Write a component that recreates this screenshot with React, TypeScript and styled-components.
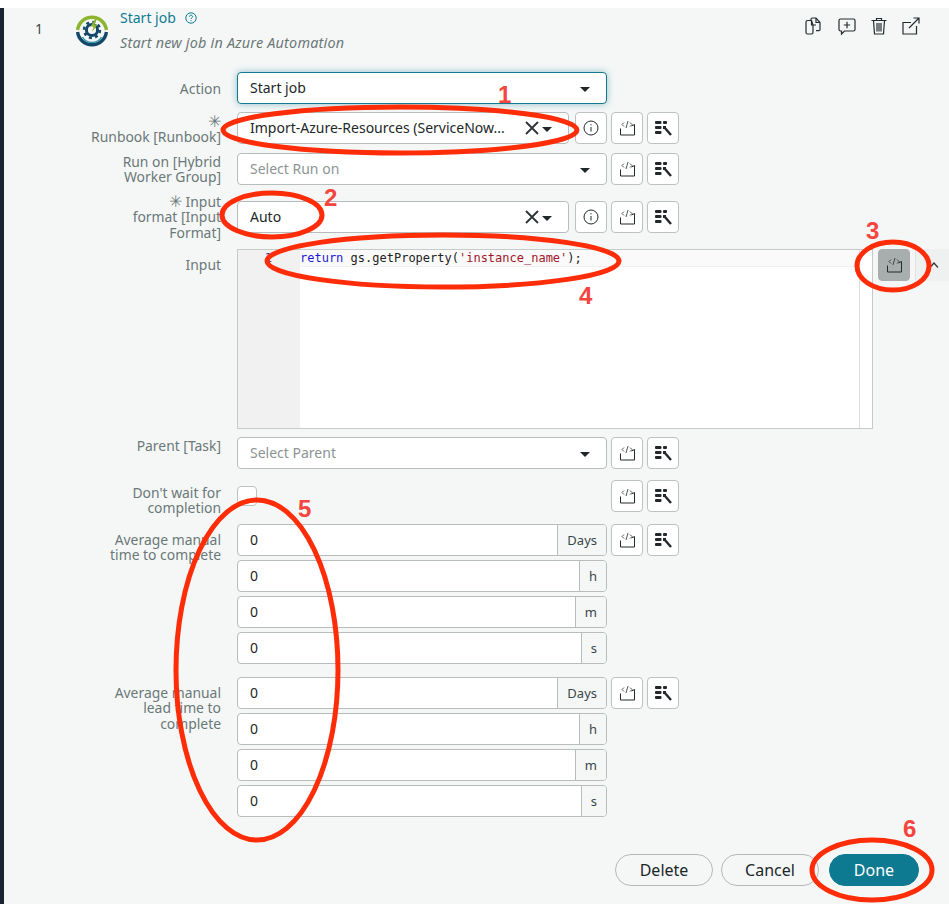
import React from "react";
import styled, { createGlobalStyle } from "styled-components";

const Global = createGlobalStyle`
  html, body { margin: 0; padding: 0; background: #fff; }
  body { font-family: "Noto Sans", "Open Sans", sans-serif; font-size: 14px; color: #1d2727; }
`;

const Page = styled.div`
  position: relative;
  width: 949px;
  height: 904px;
  overflow: hidden;
  padding-top: 8px;
  box-sizing: border-box;
  display: flex;
`;
const Strip = styled.div`
  width: 4px;
  flex: none;
  background: #1a2331;
`;
const Panel = styled.main`
  flex: 1;
  background: #f5f7f7;
  min-width: 0;
`;
const Header = styled.header`
  height: 64px;
  display: flex;
  align-items: flex-start;
  padding-right: 28px;
`;
const StepNo = styled.div`
  width: 71px;
  padding: 11px 0 0 31px;
  box-sizing: border-box;
  line-height: 19px;
  color: #39464a;
  font-size: 14px;
`;
const Logo = styled.svg`
  width: 34px;
  height: 34px;
  margin-top: 5px;
  flex: none;
`;
const Titles = styled.div`
  margin-left: 11px;
  display: flex;
  flex-direction: column;
  gap: 6px;
`;
const TitleRow = styled.div`
  display: flex;
  align-items: center;
  gap: 9px;
  height: 19px;
`;
const Title = styled.span`
  color: #0f7b91;
  font-size: 14px;
  line-height: 19px;
`;
const Subtitle = styled.span`
  color: #6c7777;
  font-style: italic;
  font-size: 14.4px;
  letter-spacing: 0.2px;
  line-height: 19px;
`;
const HeadActions = styled.div`
  margin-left: auto;
  display: flex;
  align-items: center;
  gap: 12px;
  height: 20px;
  margin-top: 8px;
`;
const HeadIcon = styled.svg<{ $after?: number }>`
  width: 20px;
  height: 20px;
  margin-right: ${(p) => p.$after ?? 0}px;
  fill: none;
  stroke: #242c2f;
  stroke-width: 1.2;
`;

const Form = styled.div`
  display: flex;
  flex-direction: column;
`;
const Row = styled.div<{ $gap: number; $h?: number }>`
  display: flex;
  align-items: flex-start;
  margin-top: ${(p) => p.$gap}px;
  height: ${(p) => p.$h ?? 32}px;
`;
const Label = styled.label<{ $top: number }>`
  width: 217px;
  flex: none;
  margin: ${(p) => p.$top}px 16px 0 0;
  text-align: right;
  color: #6b7878;
  font-size: 13.9px;
  line-height: 15.4px;
`;
const Star = styled.span`
  font-size: 16px;
  color: #6b7878;
`;
const Field = styled.div`
  width: 370px;
  flex: none;
  display: flex;
  gap: 6px;
`;
const Stack = styled(Field)`
  flex-direction: column;
  gap: 4px;
`;
const Select = styled.div<{ $focus?: boolean }>`
  flex: 1;
  min-width: 0;
  height: 32px;
  box-sizing: border-box;
  display: flex;
  align-items: center;
  padding: 0 16px 0 12px;
  background: #fff;
  border: 1px solid ${(p) => (p.$focus ? "#12798f" : "#b7bcbc")};
  border-radius: 4px;
  box-shadow: ${(p) => (p.$focus ? "0 0 7px rgba(18,121,143,.45)" : "none")};
`;
const SelectText = styled.span<{ $muted?: boolean }>`
  flex: 1;
  min-width: 0;
  padding-bottom: 2px;
  white-space: nowrap;
  overflow: hidden;
  color: ${(p) => (p.$muted ? "#8c9494" : "#1d2727")};
`;
const Clear = styled.svg`
  width: 14px;
  height: 14px;
  margin-right: 3px;
  stroke: #2c3436;
  stroke-width: 1.8;
  fill: none;
  flex: none;
`;
const Caret = styled.span`
  width: 0;
  height: 0;
  flex: none;
  margin-top: 2px;
  border-left: 5px solid transparent;
  border-right: 5px solid transparent;
  border-top: 5px solid #1f2729;
`;
const Toolbar = styled.div`
  display: flex;
  gap: 4px;
  margin-left: 4px;
`;
const ToolButton = styled.button<{ $active?: boolean }>`
  width: 32px;
  height: 32px;
  padding: 0;
  flex: none;
  display: flex;
  align-items: center;
  justify-content: center;
  box-sizing: border-box;
  background: ${(p) => (p.$active ? "#a8adad" : "#fff")};
  border: 1px solid ${(p) => (p.$active ? "#a8adad" : "#bcc1c1")};
  border-radius: 4px;
`;
const Editor = styled.div`
  width: 636px;
  height: 180px;
  flex: none;
  box-sizing: border-box;
  background: #fff;
  border: 1px solid #c6caca;
  display: flex;
`;
const Gutter = styled.div`
  width: 62px;
  flex: none;
  background: #f1f1f1;
  text-align: right;
  padding-right: 28px;
  box-sizing: border-box;
  font: 12px/16px "DejaVu Sans Mono", monospace;
  color: #2a3fa8;
`;
const CodeArea = styled.div`
  flex: 1;
  min-width: 0;
`;
const ActiveLine = styled.div`
  height: 16px;
  background: #fafafa;
  border-bottom: 1px solid #f0f0f0;
  font: 12px/16px "DejaVu Sans Mono", monospace;
  white-space: pre;
  color: #222;
`;
const Keyword = styled.span`
  color: #1a1ad6;
`;
const Str = styled.span`
  color: #a01528;
`;
const ScrollBar = styled.div`
  width: 12px;
  flex: none;
  border-left: 1px solid #dcdede;
  background: #fff;
`;
const RunSlot = styled.div`
  margin-left: 5px;
`;
const Collapse = styled.div`
  margin-left: 5px;
  width: 34px;
  height: 32px;
  flex: none;
  background: #eff1f1;
  border-left: 1px solid #dfe2e2;
  box-sizing: border-box;
  display: flex;
  align-items: center;
  padding-left: 13px;
`;
const Chevron = styled.svg`
  width: 10px;
  height: 6px;
  fill: none;
  stroke: #2c3436;
  stroke-width: 1.2;
`;
const CheckField = styled(Field)`
  padding-top: 6px;
`;
const Check = styled.span`
  width: 20px;
  height: 20px;
  box-sizing: border-box;
  background: #fff;
  border: 1px solid #bcc1c1;
  border-radius: 4px;
`;
const Group = styled.div`
  height: 32px;
  box-sizing: border-box;
  display: flex;
  align-items: center;
  background: #fff;
  border: 1px solid #b7bcbc;
  border-radius: 4px;
`;
const GroupValue = styled.span`
  flex: 1;
  padding: 0 0 2px 12px;
`;
const Addon = styled.span`
  height: 100%;
  display: flex;
  align-items: center;
  padding: 0 9px;
  background: #f5f7f7;
  border-left: 1px solid #b7bcbc;
  border-radius: 0 3px 3px 0;
  font-size: 13px;
  color: #39464a;
`;
const Footer = styled.footer`
  display: flex;
  margin-top: 37px;
  padding-left: 611px;
  gap: 8px;
`;
const Pill = styled.button<{ $primary?: boolean; $w: number }>`
  width: ${(p) => p.$w}px;
  height: 32px;
  box-sizing: border-box;
  border-radius: 16px;
  font: 16px "Noto Sans", sans-serif;
  color: ${(p) => (p.$primary ? "#fff" : "#1d2727")};
  background: ${(p) => (p.$primary ? "#0e7a91" : "transparent")};
  border: 1px solid ${(p) => (p.$primary ? "#0e7a91" : "#b4b9b9")};
  margin-left: ${(p) => (p.$primary ? 2 : 0)}px;
  padding: 0;
`;
const Ink = styled.svg`
  position: absolute;
  inset: 0;
  width: 949px;
  height: 904px;
  pointer-events: none;
  fill: none;
  stroke: #ff2c08;
  stroke-width: 5;
`;
const Marker = styled.span<{ $x: number; $y: number }>`
  position: absolute;
  left: ${(p) => p.$x}px;
  top: ${(p) => p.$y}px;
  font: bold 24px/24px "Liberation Sans", sans-serif;
  color: #f4453f;
`;

const CodeIcon = () => (
  <svg width="17" height="16" viewBox="0 0 17 16" fill="none" stroke="#23292b" strokeWidth="1">
    <path d="M1.500 8.500V15H15.500V4.500L12.500 6" />
    <path d="M5 2.500L3 4.500L5 6.500M11 2.500L13 4.500L11 6.500M9 1L7 8" strokeWidth="0.8" />
  </svg>
);
const WandIcon = () => (
  <svg width="17" height="15" viewBox="0 0 17 15">
    <g fill="#23292b">
      <rect x="0" y="0" width="6.500" height="3" rx="1" />
      <rect x="8" y="0" width="4" height="3" rx="1" />
      <rect x="0" y="5" width="6.500" height="3" rx="1" />
      <rect x="0" y="10" width="6.500" height="3" rx="1" />
      <rect x="8" y="5" width="3" height="3" />
    </g>
    <path d="M9.500 6.500L16 14" stroke="#23292b" strokeWidth="2.400" />
  </svg>
);
const InfoIcon = () => (
  <svg width="16" height="16" viewBox="0 0 16 16" fill="none" stroke="#23292b" strokeWidth="1">
    <circle cx="8" cy="8" r="7" />
    <path d="M8 7v4.500" />
    <path d="M8 4.200v1.200" />
  </svg>
);
const ClearIcon = () => (
  <Clear viewBox="0 0 14 14">
    <path d="M1 1L13 13M13 1L1 13" />
  </Clear>
);
const Tools = () => (
  <Toolbar>
    <ToolButton><CodeIcon /></ToolButton>
    <ToolButton><WandIcon /></ToolButton>
  </Toolbar>
);
const Info = () => (
  <ToolButton><InfoIcon /></ToolButton>
);

const Duration = ({ label, top }: { label: React.ReactNode; top: number }) => (
  <>
    <Label $top={top}>{label}</Label>
    <Stack>
      <Group><GroupValue>0</GroupValue><Addon>Days</Addon></Group>
      <Group><GroupValue>0</GroupValue><Addon>h</Addon></Group>
      <Group><GroupValue>0</GroupValue><Addon>m</Addon></Group>
      <Group><GroupValue>0</GroupValue><Addon>s</Addon></Group>
    </Stack>
    <Tools />
  </>
);

export default function App() {
  return (
    <Page>
      <Global />
      <Strip />
      <Panel>
        <Header>
          <StepNo>1</StepNo>
          <Logo viewBox="0 0 34 34" fill="none">
            <path d="M2.600 17A14.500 14.500 0 0 1 31.400 17" stroke="#8cb52d" strokeWidth="3.400" />
            <path d="M2.600 19A14.500 14.500 0 0 0 31.400 19" stroke="#14476a" strokeWidth="3.400" />
            <path d="M7.500 24A11 11 0 0 0 26.500 24" stroke="#2a9aa8" strokeWidth="1.400" />
            <circle cx="17" cy="17" r="5.600" stroke="#14476a" strokeWidth="3" />
            <circle cx="17" cy="17" r="8" stroke="#14476a" strokeWidth="2.400" strokeDasharray="3 3.300" />
            <path d="M20 6L15.600 13.500H18.600L17 19L22.600 11.500H19.400L22 6Z" fill="#8cb52d" />
          </Logo>
          <Titles>
            <TitleRow>
              <Title>Start job</Title>
              <svg width="12" height="12" viewBox="0 0 12 12" fill="none" stroke="#0f7b91" strokeWidth="1">
                <circle cx="6" cy="6" r="5.200" />
                <path d="M4.400 4.700C4.400 3.700 5.100 3.200 6 3.200s1.600.6 1.600 1.400c0 1.200-1.600 1.200-1.600 2.400M6 8.200v1" />
              </svg>
            </TitleRow>
            <Subtitle>Start new job in Azure Automation</Subtitle>
          </Titles>
          <HeadActions>
            <HeadIcon viewBox="0 0 20 20" $after={2}>
              <path d="M8.500 4.500H4.500a1.500 1.500 0 0 0-1.500 1.500v10.500a1.500 1.500 0 0 0 1.500 1.500h4a1.500 1.500 0 0 0 1.500-1.500V9z" />
              <path d="M8.500 4.500V9H13" />
              <path d="M8 4V3.200A1.200 1.200 0 0 1 9.200 2H13l4 4.500v7a1.200 1.200 0 0 1-1.200 1.200H13" />
              <path d="M13 2v4.500h4" />
            </HeadIcon>
            <HeadIcon viewBox="0 0 20 20">
              <path d="M3.500 3h13A1.500 1.500 0 0 1 18 4.500v9a1.500 1.500 0 0 1-1.500 1.500H7.500L4.500 18v-3h-1A1.500 1.500 0 0 1 2 13.500v-9A1.500 1.500 0 0 1 3.500 3z" />
              <path d="M10 5.800v6.400M6.800 9h6.400" />
            </HeadIcon>
            <HeadIcon viewBox="0 0 20 20">
              <path d="M2.500 4.500h15M7.500 4.500V2.500h5v2M4.500 4.500l1 13.500h9l1-13.500" />
              <path d="M8 7v8.500M10 7v8.500M12 7v8.500" />
            </HeadIcon>
            <HeadIcon viewBox="0 0 20 20">
              <path d="M15.500 10v8H2V6.500h8" />
              <path d="M8 12L18 2M12.500 2H18v5.500" />
            </HeadIcon>
          </HeadActions>
        </Header>
        <Form>
          <Row $gap={0}>
            <Label $top={9}>Action</Label>
            <Field>
              <Select $focus><SelectText>Start job</SelectText><Caret /></Select>
            </Field>
          </Row>
          <Row $gap={8}>
            <Label $top={2}><Star>✳</Star><br />Runbook [Runbook]</Label>
            <Field>
              <Select>
                <SelectText>Import-Azure-Resources (ServiceNow...</SelectText>
                <ClearIcon /><Caret />
              </Select>
              <Info />
            </Field>
            <Tools />
          </Row>
          <Row $gap={9}>
            <Label $top={1}>Run on [Hybrid<br />Worker Group]</Label>
            <Field>
              <Select><SelectText $muted>Select Run on</SelectText><Caret /></Select>
            </Field>
            <Tools />
          </Row>
          <Row $gap={16}>
            <Label $top={-7}><Star>✳</Star> Input<br />format [Input<br />Format]</Label>
            <Field>
              <Select>
                <SelectText>Auto</SelectText>
                <ClearIcon /><Caret />
              </Select>
              <Info />
            </Field>
            <Tools />
          </Row>
          <Row $gap={16} $h={180}>
            <Label $top={8}>Input</Label>
            <Editor>
              <Gutter>1</Gutter>
              <CodeArea>
                <ActiveLine>
                  <Keyword>return</Keyword> gs.getProperty(<Str>'instance_name'</Str>);
                </ActiveLine>
              </CodeArea>
              <ScrollBar />
            </Editor>
            <RunSlot>
              <ToolButton $active><CodeIcon /></ToolButton>
            </RunSlot>
            <Collapse>
              <Chevron viewBox="0 0 10 6"><path d="M1 5.500L5 1l4 4.500" /></Chevron>
            </Collapse>
          </Row>
          <Row $gap={8}>
            <Label $top={1}>Parent [Task]</Label>
            <Field>
              <Select><SelectText $muted>Select Parent</SelectText><Caret /></Select>
            </Field>
            <Tools />
          </Row>
          <Row $gap={11}>
            <Label $top={5}>Don't wait for<br />completion</Label>
            <CheckField><Check /></CheckField>
            <Tools />
          </Row>
          <Row $gap={12} $h={140}>
            <Duration top={8} label={<>Average manual<br />time to complete</>} />
          </Row>
          <Row $gap={13} $h={140}>
            <Duration top={8} label={<>Average manual<br />lead time to<br />complete</>} />
          </Row>
        </Form>
        <Footer>
          <Pill $w={98}>Delete</Pill>
          <Pill $w={98}>Cancel</Pill>
          <Pill $primary $w={90}>Done</Pill>
        </Footer>
      </Panel>
      <Ink viewBox="0 0 949 904">
        <ellipse cx="400" cy="130" rx="177" ry="23" />
        <ellipse cx="272" cy="215" rx="50" ry="22" />
        <ellipse cx="893" cy="266" rx="36" ry="24" />
        <ellipse cx="443" cy="261" rx="176" ry="26" />
        <ellipse cx="257" cy="670" rx="81" ry="170" />
        <ellipse cx="872" cy="870" rx="60" ry="30" />
      </Ink>
      <Marker $x={498} $y={83}>1</Marker>
      <Marker $x={324} $y={186}>2</Marker>
      <Marker $x={866} $y={219}>3</Marker>
      <Marker $x={579} $y={284}>4</Marker>
      <Marker $x={298} $y={497}>5</Marker>
      <Marker $x={903} $y={817}>6</Marker>
    </Page>
  );
}
